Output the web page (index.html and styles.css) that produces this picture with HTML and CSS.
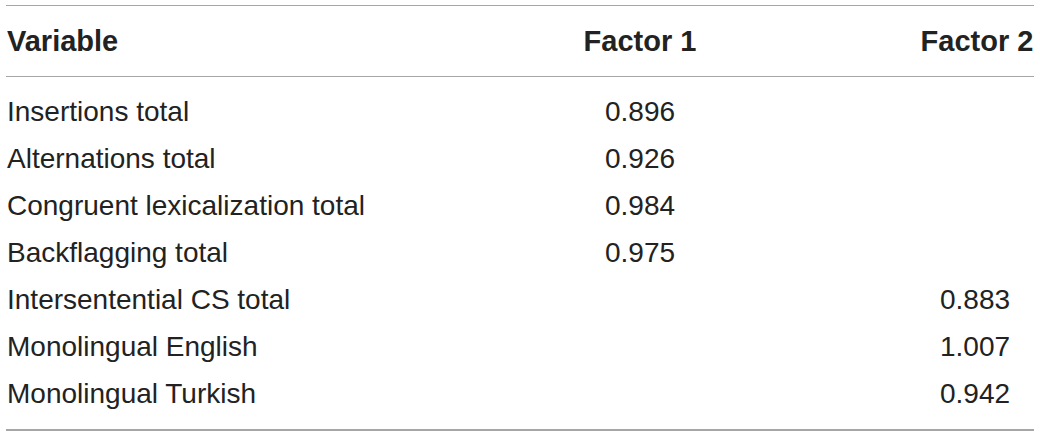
FILE: index.html
```html
<!DOCTYPE html>
<html>
<head>
<meta charset="utf-8">
<link rel="stylesheet" href="styles.css">
</head>
<body>
<div class="table">
  <div class="row head">
    <div class="c1">Variable</div>
    <div class="c2">Factor 1</div>
    <div class="c3">Factor 2</div>
  </div>
  <div class="body">
    <div class="row"><div class="c1">Insertions total</div><div class="c2">0.896</div><div class="c3"></div></div>
    <div class="row"><div class="c1">Alternations total</div><div class="c2">0.926</div><div class="c3"></div></div>
    <div class="row"><div class="c1">Congruent lexicalization total</div><div class="c2">0.984</div><div class="c3"></div></div>
    <div class="row"><div class="c1">Backflagging total</div><div class="c2">0.975</div><div class="c3"></div></div>
    <div class="row"><div class="c1">Intersentential CS total</div><div class="c2"></div><div class="c3">0.883</div></div>
    <div class="row"><div class="c1">Monolingual English</div><div class="c2"></div><div class="c3">1.007</div></div>
    <div class="row"><div class="c1">Monolingual Turkish</div><div class="c2"></div><div class="c3">0.942</div></div>
  </div>
</div>
</body>
</html>
```

FILE: styles.css
```css
html, body {
  margin: 0;
  padding: 0;
  background: #ffffff;
}
body {
  padding: 5px 6px 0 6px;
  font-family: "Liberation Sans", Arial, sans-serif;
  color: #222222;
}
.table {
  width: 1028px;
  border-top: 1px solid #a6a6a6;
  border-bottom: 2px solid #a6a6a6;
}
.row {
  display: grid;
  grid-template-columns: 554px 160px 196px 118px;
  align-items: center;
  font-size: 28px;
  height: 47px;
}
.row .c1 { grid-column: 1; padding-left: 1px; }
.row .c2 { grid-column: 2; text-align: center; }
.row .c3 { grid-column: 4; text-align: center; }
.head {
  height: 70px;
  font-size: 29px;
  font-weight: bold;
  border-bottom: 1px solid #a6a6a6;
}
.head .c3 { padding-left: 4px; }
.body {
  padding: 11px 0 12px 0;
}
```
